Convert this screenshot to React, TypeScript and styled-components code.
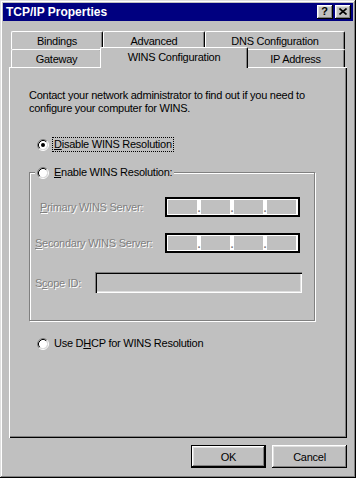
import React from "react";
import styled, { createGlobalStyle } from "styled-components";

const Global = createGlobalStyle`
  html, body { margin: 0; padding: 0; background: #c0c0c0; }
  body {
    font-family: "Liberation Sans", Arial, sans-serif;
    font-size: 11px;
    color: #000;
  }
`;

const Window = styled.div`
  box-sizing: border-box;
  width: 356px;
  height: 478px;
  padding: 3px;
  background: #c0c0c0;
  box-shadow: inset -1px -1px 0 #000, inset 1px 1px 0 #dfdfdf,
    inset -2px -2px 0 #808080, inset 2px 2px 0 #fff;
  display: flex;
  flex-direction: column;
`;

const TitleBar = styled.div`
  height: 18px;
  background: #000080;
  display: flex;
  align-items: center;
  padding: 0 2px 0 3px;
`;

const Title = styled.span`
  flex: 1;
  color: #fff;
  font-weight: bold;
  font-size: 12px;
`;

const CaptionButton = styled.div<{ $gap?: number }>`
  box-sizing: border-box;
  width: 16px;
  height: 14px;
  margin-left: ${(p) => p.$gap ?? 0}px;
  background: #c0c0c0;
  box-shadow: inset -1px -1px 0 #000, inset 1px 1px 0 #fff,
    inset -2px -2px 0 #808080, inset 2px 2px 0 #dfdfdf;
  display: flex;
  align-items: center;
  justify-content: center;
  font-weight: bold;
  font-size: 11px;
  line-height: 11px;
  padding: 0 1px 1px 0;
`;

const Body = styled.div`
  display: flex;
  flex-direction: column;
  padding: 10px 6px 0 6px;
`;

const TabRow = styled.div`
  display: flex;
  height: 18px;
  padding: 0 2px;
`;

const Tab = styled.div<{ $w: number; $active?: boolean }>`
  box-sizing: border-box;
  width: ${(p) => (p.$active ? p.$w + 4 : p.$w)}px;
  height: ${(p) => (p.$active ? 21 : 18)}px;
  margin: ${(p) => (p.$active ? "-2px -2px -1px" : "0")};
  position: relative;
  z-index: ${(p) => (p.$active ? 2 : 1)};
  background: #c0c0c0;
  border-top: 1px solid #fff;
  border-left: 1px solid #fff;
  border-right: 1px solid #000;
  border-radius: 2px 2px 0 0;
  box-shadow: inset -1px 0 0 #808080;
  display: flex;
  align-items: center;
  justify-content: center;
  padding-bottom: ${(p) => (p.$active ? 3 : 0)}px;
  letter-spacing: -0.25px;
  white-space: nowrap;
`;

const Panel = styled.div`
  box-sizing: border-box;
  height: 371px;
  background: #c0c0c0;
  box-shadow: inset 1px 1px 0 #fff, inset -1px -1px 0 #000,
    inset -2px -2px 0 #808080;
  padding: 22px 0 0 20px;
  display: flex;
  flex-direction: column;
  align-items: flex-start;
`;

const Description = styled.p`
  margin: 0;
  width: 292px;
  line-height: 13px;
  letter-spacing: -0.25px;
`;

const RadioRow = styled.div<{ $mt: number }>`
  display: flex;
  align-items: center;
  margin-top: ${(p) => p.$mt}px;
  padding-left: 8px;
  height: 15px;
  letter-spacing: -0.25px;
`;

const RadioLabel = styled.span<{ $focus?: boolean }>`
  margin-left: ${(p) => (p.$focus ? 3 : 5)}px;
  padding: 0 1px;
  line-height: 13px;
  border: 1px dotted ${(p) => (p.$focus ? "#000" : "transparent")};
  ${(p) => (p.$focus ? "" : "border-width: 0; padding: 0;")}
  white-space: nowrap;
`;

const GroupBox = styled.fieldset`
  box-sizing: border-box;
  width: 286px;
  margin: 14px 0 0 0;
  padding: 0 0 27px 0;
  border: 1px solid #808080;
  box-shadow: inset 1px 1px 0 #fff, 1px 1px 0 #fff;
  min-width: 0;
`;

const Legend = styled.legend`
  margin-left: 5px;
  padding: 0 2px;
  background: #c0c0c0;
  display: flex;
  align-items: center;
  height: 13px;
  letter-spacing: -0.25px;
  white-space: nowrap;
`;

const FieldRow = styled.div<{ $mt: number; $indent: number; $right: number }>`
  display: flex;
  align-items: center;
  margin-top: ${(p) => p.$mt}px;
  padding-left: ${(p) => p.$indent}px;
  padding-right: ${(p) => p.$right}px;
`;

const DisabledLabel = styled.span`
  color: #808080;
  text-shadow: 1px 1px 0 #fff;
  letter-spacing: -0.25px;
  white-space: nowrap;
  margin-right: auto;
`;

const IPField = styled.div`
  box-sizing: border-box;
  width: 135px;
  height: 20px;
  border: 2px solid #000;
  background: #fff;
  padding: 1px 0 1px 1px;
  display: flex;
`;

const IPSegment = styled.div`
  width: 29px;
  background: #c0c0c0;
`;

const IPDot = styled.span`
  width: 4px;
  display: flex;
  align-items: flex-end;
  justify-content: center;
  color: #808080;
  font-size: 11px;
  line-height: 12px;
  font-weight: bold;
`;

const TextField = styled.div`
  box-sizing: border-box;
  width: 207px;
  height: 21px;
  background: #c0c0c0;
  box-shadow: inset 1px 1px 0 #808080, inset 2px 2px 0 #000,
    inset -1px -1px 0 #fff, inset -2px -2px 0 #dfdfdf;
`;

const ButtonRow = styled.div`
  display: flex;
  justify-content: flex-end;
  gap: 6px;
  margin-top: 7px;
`;

const PushButton = styled.div<{ $default?: boolean }>`
  box-sizing: border-box;
  width: 75px;
  height: 23px;
  display: flex;
  align-items: center;
  justify-content: center;
  background: #c0c0c0;
  letter-spacing: -0.25px;
  box-shadow: ${(p) =>
    p.$default
      ? "inset 0 0 0 1px #000, inset -2px -2px 0 #000, inset 2px 2px 0 #fff, inset -3px -3px 0 #808080, inset 3px 3px 0 #dfdfdf"
      : "inset -1px -1px 0 #000, inset 1px 1px 0 #fff, inset -2px -2px 0 #808080, inset 2px 2px 0 #dfdfdf"};
`;

const RadioSvg = styled.svg`
  flex: none;
  display: block;
`;

function Radio({ checked }: { checked?: boolean }) {
  return (
    <RadioSvg width="12" height="12" viewBox="0 0 12 12">
      <circle cx="6" cy="6" r="4.2" fill="#fff" />
      <path d="M2.11 9.89 A5.5 5.5 0 0 1 9.89 2.11" stroke="#808080" fill="none" />
      <path d="M9.89 2.11 A5.5 5.5 0 0 1 2.11 9.89" stroke="#fff" fill="none" />
      <path d="M2.82 9.18 A4.5 4.5 0 0 1 9.18 2.82" stroke="#000" fill="none" />
      <path d="M9.18 2.82 A4.5 4.5 0 0 1 2.82 9.18" stroke="#dfdfdf" fill="none" />
      {checked && <circle cx="6" cy="6" r="2" fill="#000" />}
    </RadioSvg>
  );
}

function IPBox() {
  return (
    <IPField>
      <IPSegment />
      <IPDot>.</IPDot>
      <IPSegment />
      <IPDot>.</IPDot>
      <IPSegment />
      <IPDot>.</IPDot>
      <IPSegment />
    </IPField>
  );
}

export default function App() {
  return (
    <>
      <Global />
      <Window>
        <TitleBar>
          <Title>TCP/IP Properties</Title>
          <CaptionButton>?</CaptionButton>
          <CaptionButton $gap={2}>
            <svg width="8" height="7" viewBox="0 0 8 7">
              <path d="M0.5 0.5 L7.5 6.5 M7.5 0.5 L0.5 6.5" stroke="#000" strokeWidth="1.6" />
            </svg>
          </CaptionButton>
        </TitleBar>
        <Body>
          <TabRow>
            <Tab $w={92}>Bindings</Tab>
            <Tab $w={102}>Advanced</Tab>
            <Tab $w={140}>DNS Configuration</Tab>
          </TabRow>
          <TabRow>
            <Tab $w={91}>Gateway</Tab>
            <Tab $w={144} $active>
              WINS Configuration
            </Tab>
            <Tab $w={99}>IP Address</Tab>
          </TabRow>
          <Panel>
            <Description>
              Contact your network administrator to find out if you need to configure your
              computer for WINS.
            </Description>
            <RadioRow $mt={22}>
              <Radio checked />
              <RadioLabel $focus>
                <u>D</u>isable WINS Resolution
              </RadioLabel>
            </RadioRow>
            <GroupBox>
              <Legend>
                <Radio />
                <RadioLabel>
                  <u>E</u>nable WINS Resolution:
                </RadioLabel>
              </Legend>
              <FieldRow $mt={18} $indent={10} $right={14}>
                <DisabledLabel>
                  <u>P</u>rimary WINS Server:
                </DisabledLabel>
                <IPBox />
              </FieldRow>
              <FieldRow $mt={16} $indent={5} $right={14}>
                <DisabledLabel>
                  <u>S</u>econdary WINS Server:
                </DisabledLabel>
                <IPBox />
              </FieldRow>
              <FieldRow $mt={19} $indent={5} $right={12}>
                <DisabledLabel>
                  S<u>c</u>ope ID:
                </DisabledLabel>
                <TextField />
              </FieldRow>
            </GroupBox>
            <RadioRow $mt={15}>
              <Radio />
              <RadioLabel>
                Use D<u>H</u>CP for WINS Resolution
              </RadioLabel>
            </RadioRow>
          </Panel>
          <ButtonRow>
            <PushButton $default>OK</PushButton>
            <PushButton>Cancel</PushButton>
          </ButtonRow>
        </Body>
      </Window>
    </>
  );
}
